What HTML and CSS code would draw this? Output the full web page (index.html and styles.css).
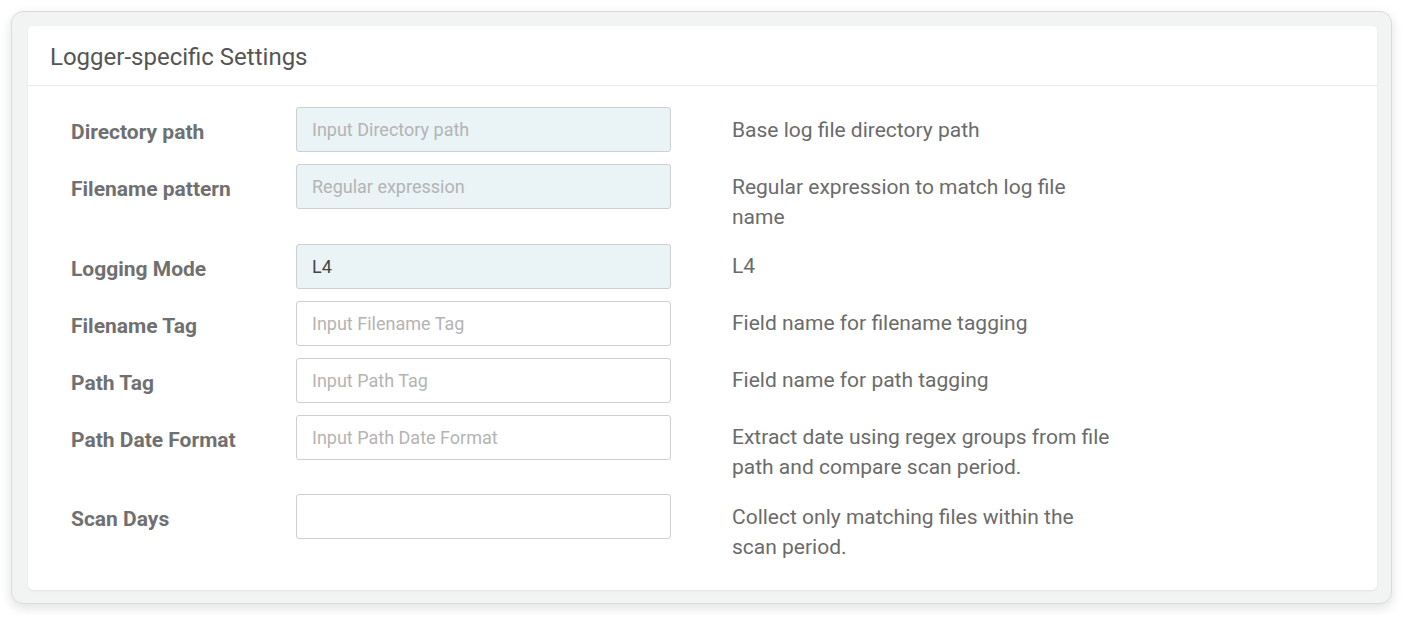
FILE: index.html
```html
<!DOCTYPE html>
<html lang="en">
	<head>
		<meta charset="UTF-8" />
		<meta name="viewport" content="width=device-width, initial-scale=1.0" />
		<title>Logger-specific Settings</title>
		<link rel="stylesheet" href="styles.css">
	</head>
	<body>
		<div class="panel">
			<div class="card">
				<div class="card-header">
					<h2 class="card-title">Logger-specific Settings</h2>
				</div>

				<div class="card-body">
					<div class="form-row">
						<label class="form-label">Directory path</label>
						<input class="form-input" type="text" placeholder="Input Directory path" disabled>
						<div class="form-help">Base log file directory path</div>
					</div>

					<div class="form-row">
						<label class="form-label">Filename pattern</label>
						<input class="form-input" type="text" placeholder="Regular expression" disabled>
						<div class="form-help">Regular expression to match log file name</div>
					</div>

					<div class="form-row">
						<label class="form-label">Logging Mode</label>
						<input class="form-input" type="text" value="L4" disabled>
						<div class="form-help">L4</div>
					</div>

					<div class="form-row">
						<label class="form-label">Filename Tag</label>
						<input class="form-input" type="text" placeholder="Input Filename Tag">
						<div class="form-help">Field name for filename tagging</div>
					</div>

					<div class="form-row">
						<label class="form-label">Path Tag</label>
						<input class="form-input" type="text" placeholder="Input Path Tag">
						<div class="form-help">Field name for path tagging</div>
					</div>

					<div class="form-row">
						<label class="form-label">Path Date Format</label>
						<input class="form-input" type="text" placeholder="Input Path Date Format">
						<div class="form-help">Extract date using regex groups from file path and compare scan period.</div>
					</div>

					<div class="form-row">
						<label class="form-label">Scan Days</label>
						<input class="form-input" type="text">
						<div class="form-help">Collect only matching files within the scan period.</div>
					</div>
				</div>
			</div>
		</div>
	</body>
</html>
```

FILE: styles.css
```css
* {
	margin: 0;
	padding: 0;
	box-sizing: border-box;
}

body {
	background: #ffffff;
	font-family: Roboto, 'Noto Sans', sans-serif;
	padding: 11px;
}

.panel {
	width: 1381px;
	background: #f2f4f4;
	border: 1px solid #d9dcdc;
	border-radius: 12px;
	box-shadow: 0 4px 12px rgba(0, 0, 0, 0.12);
	padding: 14px 14px 13px 16px;
}

.card {
	background: #ffffff;
	border-radius: 5px;
	box-shadow: 0 1px 2px rgba(0, 0, 0, 0.08);
}

.card-header {
	height: 60px;
	border-bottom: 1px solid #ebebeb;
	padding: 0 22px;
	display: flex;
	align-items: center;
}

.card-title {
	font-size: 24px;
	font-weight: 400;
	color: #555555;
	padding-top: 2px;
}

.card-body {
	padding: 21px 43px 16px;
}

.form-row {
	display: flex;
	align-items: flex-start;
	margin-bottom: 12px;
}

.form-label {
	width: 225px;
	flex-shrink: 0;
	padding-top: 11px;
	font-size: 21px;
	font-weight: 700;
	line-height: 28px;
	color: #707070;
}

.form-input {
	width: 375px;
	height: 45px;
	flex-shrink: 0;
	border: 1px solid #cfcfcf;
	border-radius: 3px;
	padding: 0 15px;
	font-family: Roboto, 'Noto Sans', sans-serif;
	font-size: 18px;
	color: #444444;
	background: #ffffff;
	outline: none;
}

.form-input:disabled {
	background: #eaf3f5;
	color: #444444;
}

.form-input::placeholder {
	color: #b4b4b4;
}

.form-help {
	width: 380px;
	margin-left: 61px;
	padding-top: 7.5px;
	font-size: 21px;
	line-height: 30px;
	color: #6b6b6b;
}
```
